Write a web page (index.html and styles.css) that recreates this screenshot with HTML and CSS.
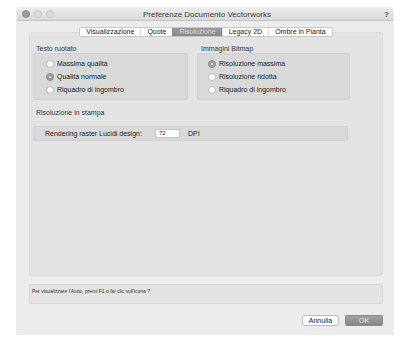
FILE: index.html
```html
<!DOCTYPE html>
<html lang="it">
<head>
    <meta charset="UTF-8">
    <meta name="viewport" content="width=device-width, initial-scale=1.0">
    <title>Preferenze Documento Vectorworks</title>
    <link rel="stylesheet" href="styles.css">
</head>
<body>
    <div class="window">
        <div class="titlebar">
            <div class="lights">
                <span class="light dark"></span>
                <span class="light"></span>
                <span class="light"></span>
            </div>
            <div class="title">Preferenze Documento Vectorworks</div>
            <div class="help-icon">?</div>
        </div>

        <div class="content">
            <div class="tabs">
                <div class="tab">Visualizzazione</div>
                <div class="tab">Quote</div>
                <div class="tab active">Risoluzione</div>
                <div class="tab">Legacy 2D</div>
                <div class="tab">Ombre in Pianta</div>
            </div>

            <div class="panel">
                <div class="groups">
                    <div class="group">
                        <div class="group-label">Testo ruotato</div>
                        <div class="group-box">
                            <div class="radio-row"><span class="radio"></span>Massima qualità</div>
                            <div class="radio-row"><span class="radio checked"></span>Qualità normale</div>
                            <div class="radio-row"><span class="radio"></span>Riquadro di ingombro</div>
                        </div>
                    </div>
                    <div class="group">
                        <div class="group-label right">Immagini Bitmap</div>
                        <div class="group-box right">
                            <div class="radio-row"><span class="radio checked"></span>Risoluzione massima</div>
                            <div class="radio-row"><span class="radio"></span>Risoluzione ridotta</div>
                            <div class="radio-row"><span class="radio"></span>Riquadro di ingombro</div>
                        </div>
                    </div>
                </div>

                <div class="group print">
                    <div class="group-label">Risoluzione in stampa</div>
                    <div class="group-box field-box">
                        <span class="field-label">Rendering raster Lucidi design:</span>
                        <span class="field-input">72</span>
                        <span class="field-unit">DPI</span>
                    </div>
                </div>
            </div>

            <div class="hint">Per visualizzare l'Aiuto, premi F1 o fai clic sull'icona ?</div>

            <div class="buttons">
                <div class="button">Annulla</div>
                <div class="button primary">OK</div>
            </div>
        </div>
    </div>
</body>
</html>
```

FILE: styles.css
```css
body {
    margin: 0;
    background-color: #fff;
    font-family: "Liberation Sans", Arial, sans-serif;
    color: #1a1a1a;
}
.window {
    width: 376px;
    height: 327px;
    margin: 8px 0 0 17px;
    background-color: #ececec;
    box-shadow: 0 0 0 1px rgba(0,0,0,0.08);
    border-radius: 3px 3px 0 0;
    overflow: hidden;
}
.titlebar {
    display: grid;
    grid-template-columns: 1fr auto 1fr;
    align-items: center;
    height: 12px;
    background: linear-gradient(#ebebeb, #d9d9d9);
    border-bottom: 1px solid #c2c2c2;
}
.lights {
    display: flex;
    gap: 4px;
    padding-left: 5px;
}
.light {
    width: 6px;
    height: 6px;
    border-radius: 50%;
    background-color: #dcdcdc;
    border: 0.5px solid #c6c6c6;
}
.light.dark {
    background-color: #9a9a9a;
    border-color: #8c8c8c;
}
.title {
    font-size: 8px;
    color: #3a3a3a;
    padding-left: 4px;
}
.help-icon {
    justify-self: end;
    padding-right: 4px;
    font-size: 8px;
    font-weight: bold;
    color: #555;
}
.content {
    padding: 0 10px 0 12px;
}
.tabs {
    position: relative;
    display: flex;
    width: max-content;
    margin: 6px auto -5px;
    background-color: #fff;
    border: 1px solid #c8c8c8;
    border-radius: 2px;
}
.tab {
    padding: 0 6px;
    font-size: 7px;
    line-height: 8px;
    color: #222;
    border-left: 1px solid #d6d6d6;
}
.tab:first-child {
    border-left: none;
}
.tab.active {
    background: linear-gradient(#9a9a9a, #878787);
    color: #dcdcdc;
    border-left-color: #8a8a8a;
}
.panel {
    height: 244px;
    box-sizing: border-box;
    padding: 12px 34px 0 3px;
    background-color: #e3e3e3;
    border: 1px solid #dcdcdc;
    border-radius: 3px;
}
.groups {
    display: grid;
    grid-template-columns: 155px 153px;
    column-gap: 9px;
}
.group-label {
    padding-left: 3px;
    font-size: 7px;
    line-height: 8px;
    color: #333;
}
.group-label.right {
    padding-left: 4px;
}
.group-box {
    box-sizing: border-box;
    padding: 3px 0 3px 12px;
    background-color: #d9d9d9;
    border: 1px solid #d1d1d1;
    border-radius: 2px;
}
.group-box.right {
    padding-left: 10px;
}
.radio-row {
    display: flex;
    align-items: center;
    gap: 3px;
    height: 13px;
    font-size: 7px;
}
.radio {
    width: 8px;
    height: 8px;
    box-sizing: border-box;
    border-radius: 50%;
    background-color: #fff;
    border: 1px solid #b9b9b9;
    display: flex;
    align-items: center;
    justify-content: center;
}
.radio.checked {
    background-color: #9c9c9c;
    border-color: #8f8f8f;
}
.radio.checked::after {
    content: "";
    width: 2px;
    height: 2px;
    border-radius: 50%;
    background-color: #f2f2f2;
}
.print {
    margin-top: 9px;
}
.print .group-label {
    margin-bottom: 9px;
}
.field-box {
    display: flex;
    align-items: center;
    height: 15px;
    padding: 0 0 0 11px;
    font-size: 7px;
}
.field-label {
    width: 110px;
}
.field-input {
    width: 25px;
    height: 9px;
    box-sizing: border-box;
    padding-left: 3px;
    background-color: #fff;
    border: 1px solid #c4c4c4;
    font-size: 6px;
    line-height: 7px;
}
.field-unit {
    margin-left: 8px;
}
.hint {
    height: 20px;
    box-sizing: border-box;
    margin-top: 8px;
    padding: 3px 2px;
    background-color: #e3e3e3;
    border: 1px solid #d8d8d8;
    border-radius: 2px;
    font-size: 5px;
    color: #333;
}
.buttons {
    display: flex;
    justify-content: flex-end;
    gap: 6px;
    margin-top: 11px;
}
.button {
    width: 37px;
    height: 11px;
    box-sizing: border-box;
    background-color: #fff;
    border: 1px solid #bdbdbd;
    border-radius: 2px;
    font-size: 7px;
    line-height: 9px;
    text-align: center;
    color: #222;
}
.button.primary {
    width: 38px;
    background: linear-gradient(#a2a2a2, #878787);
    border-color: #8a8a8a;
    color: #e4e4e4;
}
```
